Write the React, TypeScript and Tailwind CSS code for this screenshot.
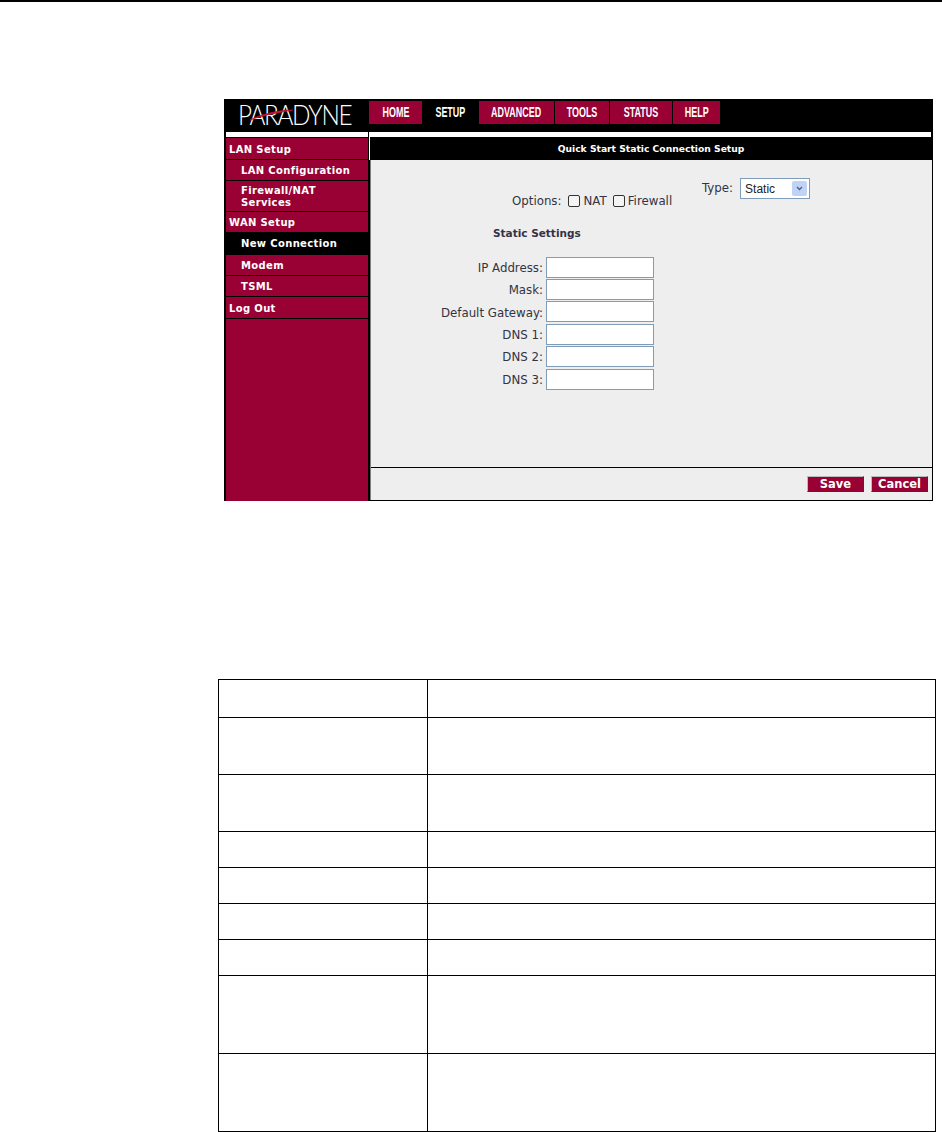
import React from "react";

const crimson = "bg-[#990033]";

function SideItem({ label, sub, active, h }: { label: React.ReactNode; sub?: boolean; active?: boolean; h: string }) {
  return (
    <div
      className={`${h} ${active ? "bg-black" : `${crimson} pt-[2px]`} border-b border-black flex items-center text-white font-bold text-[10px] leading-[12px] tracking-[0.35px] ${sub ? "pl-[15px]" : "pl-[3px]"}`}
    >
      <span>{label}</span>
    </div>
  );
}

function Tab({ label, w, active }: { label: string; w: string; active?: boolean }) {
  return (
    <div
      className={`${w} h-[23px] flex items-center justify-center mr-px text-white font-bold text-[14px] ${active ? "bg-black" : crimson}`}
      style={{ fontFamily: '"Liberation Sans", sans-serif' }}
    >
      <span className="inline-block scale-x-[0.64]">{label}</span>
    </div>
  );
}

function Field({ label }: { label: string }) {
  return (
    <div className="flex items-center justify-end h-[22.4px]">
      <span className="text-[11.8px] text-[#333344] mr-[3px] pt-[3px]">{label}</span>
      <div className="w-[108px] h-[21px] bg-white border border-[#7f9db9]" />
    </div>
  );
}

function Checkbox() {
  return <span className="inline-block w-[12px] h-[12px] rounded-[2px] border border-[#333] bg-[#f4f4f4]" />;
}

const rows = ["h-[38px]", "h-[57px]", "h-[57px]", "h-[36px]", "h-[36px]", "h-[36px]", "h-[36px]", "h-[78px]", "h-[78px]"];

export default function App() {
  return (
    <div className="w-[942px] h-[1132px] bg-white overflow-hidden border-t-2 border-black" style={{ fontFamily: '"DejaVu Sans", Verdana, sans-serif' }}>
      <div className="ml-[224px] mt-[97px] w-[709px] h-[402px] bg-black pt-[2px] pl-[2px] pr-px flex flex-col">
        {/* header */}
        <div className="h-[31px] flex shrink-0 -ml-[2px]">
          <div className="w-[145px] h-[31px] relative text-white pl-[14px]">
            <span className="text-[27px] leading-[27px] font-light tracking-[-1.5px] whitespace-nowrap block origin-left scale-x-[0.9]" style={{ fontFamily: 'Lato, "Open Sans", sans-serif' }}>
              PARADYNE
            </span>
            <svg className="absolute left-[16px] top-[2px]" width="60" height="20" viewBox="0 0 60 20">
              <path d="M10 17 C 22 11, 38 7, 53 7 C 42 9, 24 12, 10 17 Z" fill="#cc1133" stroke="#cc1133" strokeWidth="0.6" />
            </svg>
          </div>
          <div className="flex">
            <Tab label="HOME" w="w-[53px]" />
            <Tab label="SETUP" w="w-[55px]" active />
            <Tab label="ADVANCED" w="w-[75px]" />
            <Tab label="TOOLS" w="w-[54px]" />
            <Tab label="STATUS" w="w-[62px]" />
            <Tab label="HELP" w="w-[47px]" />
          </div>
        </div>
        <div className="flex flex-1 min-h-0">
          <div className="w-[142px] shrink-0 flex flex-col">
            <div className="h-[5px] bg-white mb-px shrink-0" />
            <SideItem h="h-[22px]" label="LAN Setup" />
            <SideItem h="h-[21px]" sub label="LAN Configuration" />
            <SideItem h="h-[31px]" sub label={<>Firewall/NAT<br />Services</>} />
            <SideItem h="h-[21px]" label="WAN Setup" />
            <SideItem h="h-[22px]" sub active label="New Connection" />
            <SideItem h="h-[21px]" sub label="Modem" />
            <SideItem h="h-[21px]" sub label="TSML" />
            <SideItem h="h-[22px]" label="Log Out" />
            <div className={`flex-1 ${crimson}`} />
          </div>
          <div className="w-px bg-black shrink-0" />
          <div className="flex-1 flex flex-col min-w-0">
            <div className="h-[5px] bg-white shrink-0 mr-px" />
            <div className="h-[23px] bg-black border-l border-white text-white font-bold text-[9.2px] flex items-center justify-center shrink-0">
              Quick Start Static Connection Setup
            </div>
            <div className="flex-1 flex flex-col ml-px border-l border-[#808080] mb-px">
              <div className="flex-1 bg-[#eeeeee] relative">
                <div className="absolute left-[331px] top-[18px] flex items-center">
                  <span className="text-[11.8px] text-[#333344] mr-[7px]">Type:</span>
                  <div className="w-[70px] h-[21px] bg-white border border-[#7f9db9] flex items-center justify-between pl-[4px] pr-[2px] text-[12px] text-[#222]" style={{ fontFamily: '"Liberation Sans", sans-serif' }}>
                    <span>Static</span>
                    <span className="w-[15px] h-[15px] bg-[#c1d2f7] rounded-[2px] flex items-center justify-center">
                      <svg width="7" height="5" viewBox="0 0 7 5" fill="none"><path d="M1 1l2.5 2.5L6 1" stroke="#4d6185" strokeWidth="1.4" /></svg>
                    </span>
                  </div>
                </div>
                <div className="absolute left-[141px] top-[34px] flex items-center text-[11.8px] text-[#333344] leading-[14px]">
                  <span className="mr-[6px]">Options:</span>
                  <Checkbox />
                  <span className="ml-[4px] mr-[6px]">NAT</span>
                  <Checkbox />
                  <span className="ml-[3px]">Firewall</span>
                </div>
                <div className="absolute left-[122px] top-[66px] text-[10.5px] font-bold text-[#333344] leading-[14px]">Static Settings</div>
                <div className="absolute left-[39px] top-[96px] w-[244px]">
                  <Field label="IP Address:" />
                  <Field label="Mask:" />
                  <Field label="Default Gateway:" />
                  <Field label="DNS 1:" />
                  <Field label="DNS 2:" />
                  <Field label="DNS 3:" />
                </div>
              </div>
              <div className="h-[33px] shrink-0 bg-[#eeeeee] border-t border-black flex items-center justify-end gap-[7px] pr-[4px]">
                <div className={`w-[57px] h-[16px] ${crimson} border border-t-[#bbbbbb] border-l-[#bbbbbb] border-r-[#333] border-b-[#333] text-white font-bold text-[11.5px] pt-px flex items-center justify-center`}>Save</div>
                <div className={`w-[57px] h-[16px] ${crimson} border border-t-[#bbbbbb] border-l-[#bbbbbb] border-r-[#333] border-b-[#333] text-white font-bold text-[11.5px] pt-px flex items-center justify-center`}>Cancel</div>
              </div>
            </div>
          </div>
        </div>
      </div>

      <table className="ml-[218px] mt-[178px] w-[718px] border-collapse table-fixed">
        <tbody>
          {rows.map((h, i) => (
            <tr key={i} className={h}>
              <td className="w-[209px] border border-black p-0" />
              <td className="border border-black p-0" />
            </tr>
          ))}
        </tbody>
      </table>
    </div>
  );
}
